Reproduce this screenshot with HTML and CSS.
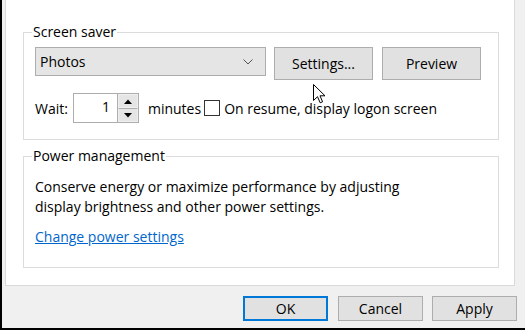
FILE: index.html
```html
<!DOCTYPE html>
<html lang="en">
<head>
  <meta charset="UTF-8">
  <title>Screen Saver Settings</title>
  <link rel="stylesheet" href="styles.css">
</head>
<body>
  <div class="dialog">
    <div class="panel">
      <fieldset class="group saver">
        <legend>Screen saver</legend>
        <div class="row">
          <div class="combo">
            <span>Photos</span>
            <svg class="chevron" width="10" height="6" viewBox="0 0 10 6">
              <path d="M0.5 0.5 L5 5 L9.5 0.5" fill="none" stroke="#555" stroke-width="1"/>
            </svg>
          </div>
          <button class="btn big">Settings...</button>
          <button class="btn big">Preview</button>
        </div>
        <div class="row wait">
          <span>Wait:</span>
          <div class="spin">
            <div class="spin-value">1</div>
            <div class="spin-arrows">
              <div class="arrow">
                <svg width="8" height="5" viewBox="0 0 8 5"><path d="M0 5 L4 0.5 L8 5 Z" fill="#000"/></svg>
              </div>
              <div class="arrow">
                <svg width="8" height="5" viewBox="0 0 8 5"><path d="M0 0 L4 4.5 L8 0 Z" fill="#000"/></svg>
              </div>
            </div>
          </div>
          <span class="minutes">minutes</span>
          <span class="check"></span>
          <span>On resume, display logon screen</span>
        </div>
      </fieldset>

      <fieldset class="group power">
        <legend>Power management</legend>
        <p>Conserve energy or maximize performance by adjusting<br>display brightness and other power settings.</p>
        <a href="#" class="link">Change power settings</a>
      </fieldset>
    </div>

    <div class="footer">
      <button class="btn small default">OK</button>
      <button class="btn small cancel">Cancel</button>
      <button class="btn small apply">Apply</button>
    </div>

    <!-- puntero del ratón -->
    <svg class="cursor" width="13" height="20" viewBox="0 0 13 20">
      <path d="M0.5 0.5 L0.5 16.5 L4.5 12.7 L7.2 18.8 L9.6 17.8 L7 11.8 L12 11.8 Z" fill="#fff" stroke="#000" stroke-width="1" stroke-linejoin="miter"/>
    </svg>
  </div>
</body>
</html>
```

FILE: styles.css
```css
* {
  box-sizing: border-box;
}

body {
  margin: 0;
  font-family: "Open Sans", "Noto Sans", sans-serif;
  font-size: 14px;
  color: #000;
  background-color: #f0f0f0;
}

.dialog {
  position: relative;
  width: 525px;
  height: 330px;
  border-left: 2px solid #000;
  border-bottom: 2px solid #000;
  background-color: #f0f0f0;
}

.panel {
  margin-left: 3px;
  width: 510px;
  height: 286px;
  padding: 22px 16px 0 17px;
  background-color: #fff;
  border: 1px solid #d9d9d9;
  border-top: none;
}

.group {
  margin: 0;
  width: 476px;
  border: 1px solid #dcdcdc;
  padding: 5px 11px 16px 11px;
}

.group legend {
  margin-left: -3px;
  padding: 0 1px;
  line-height: 20px;
}

.power {
  margin-top: 6px;
  padding-top: 11px;
  height: 122px;
}

.row {
  display: flex;
  align-items: flex-start;
}

.combo {
  width: 231px;
  height: 29px;
  background-color: #e5e5e5;
  border: 1px solid #adadad;
  display: flex;
  align-items: center;
  justify-content: space-between;
  padding: 0 12px 0 4px;
}

.chevron {
  margin-top: 1px;
}

.btn {
  font-family: inherit;
  font-size: 14px;
  color: #000;
  background-color: #e1e1e1;
  border: 1px solid #adadad;
  padding: 0;
  margin: 0;
  flex-shrink: 0;
}

.big {
  width: 99px;
  height: 33px;
  margin-left: 8px;
}

.big + .big {
  margin-left: 9px;
}

.wait {
  margin-top: 13px;
  align-items: center;
}

.spin {
  display: flex;
  margin-left: 5px;
  height: 30px;
}

.spin-value {
  width: 45px;
  border: 1px solid #adadad;
  text-align: right;
  padding: 3px 7px 0 0;
  line-height: 20px;
}

.spin-arrows {
  width: 21px;
  display: flex;
  flex-direction: column;
  border: 1px solid #adadad;
  border-left: none;
}

.arrow {
  flex: 1;
  display: flex;
  align-items: center;
  justify-content: center;
  background-color: #e5e5e5;
  border: 1px solid #f0f0f0;
}

.arrow + .arrow {
  border-top: 1px solid #adadad;
}

.minutes {
  margin-left: 9px;
}

.check {
  width: 16px;
  height: 16px;
  border: 1px solid #333;
  background-color: #fff;
  margin: 0 4px 0 3px;
}

.power p {
  margin: 0;
  line-height: 20px;
}

.link {
  display: inline-block;
  margin-top: 10px;
  line-height: 20px;
  color: #0066cc;
}

.footer {
  display: flex;
  justify-content: flex-end;
  padding: 10px 8px 0 0;
}

.small {
  width: 85px;
  height: 25px;
}

.cancel {
  margin-left: 10px;
}

.apply {
  margin-left: 9px;
}

.default {
  border: 2px solid #0078d7;
}

.cursor {
  position: absolute;
  left: 311px;
  top: 84px;
}
```
